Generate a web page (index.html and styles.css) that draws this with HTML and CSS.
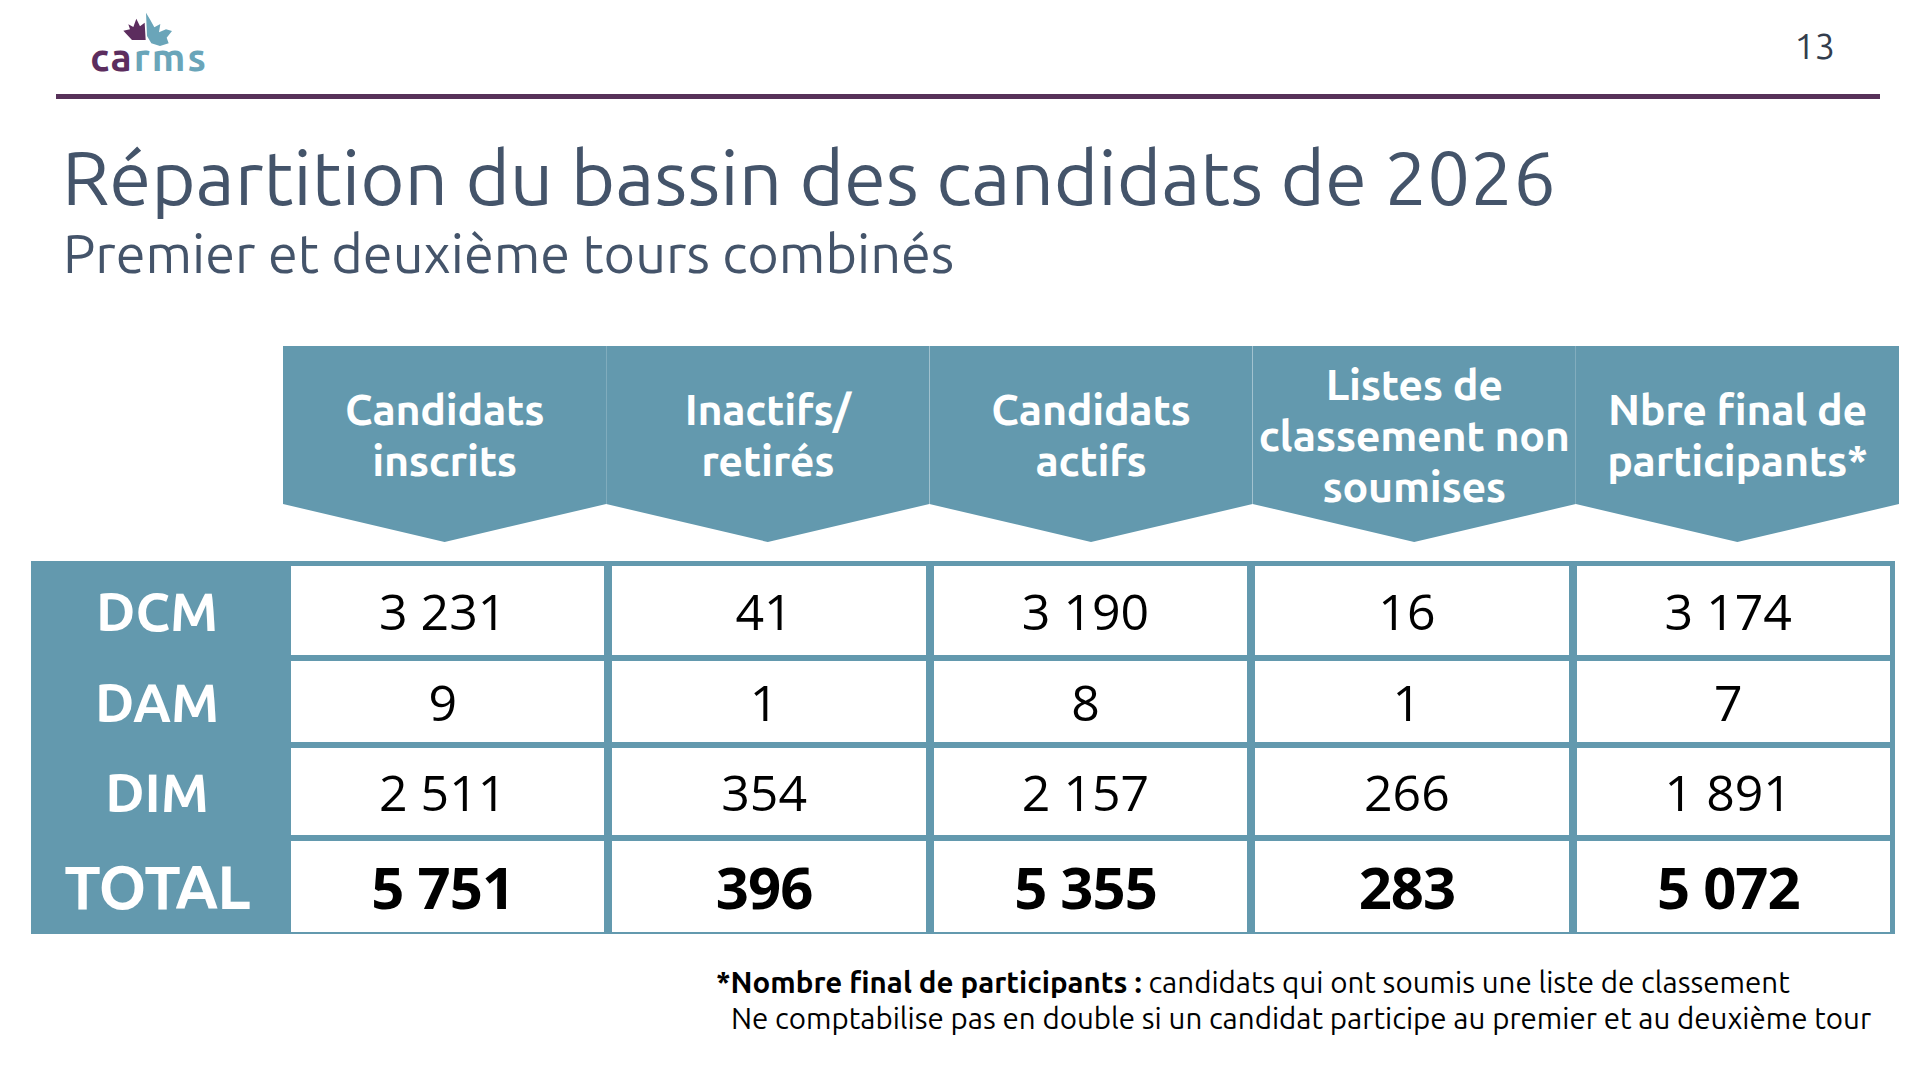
FILE: index.html
```html
<!DOCTYPE html>
<html lang="fr">
<head>
<meta charset="utf-8">
<title>Répartition du bassin des candidats de 2026</title>
<link rel="stylesheet" href="styles.css">
</head>
<body>
<div class="slide">
  <header class="top">
    <div class="logo">
      <svg class="crown" viewBox="0 0 240 120" width="80" height="40" aria-hidden="true">
        <path class="crown-purple" d="M40 62 L60 58 L55 43 L70 51 L79 26 L90 49 L104 38 L107 90 L66 90 Z"/>
        <path class="crown-teal" d="M108 8 L121 30 L133 52 L151 42 L147 67 L168 58 L186 63 L170 83 L176 100 L150 108 L124 100 L111 78 Z"/>
      </svg>
      <div class="wordmark"><span class="wm-a">ca</span><span class="wm-b">rms</span></div>
    </div>
    <div class="pagenum">13</div>
  </header>
  <div class="rule"></div>

  <h1 class="title">Répartition du bassin des candidats de 2026</h1>
  <p class="subtitle">Premier et deuxième tours combinés</p>

  <div class="heads">
    <div class="chev"><span>Candidats<br>inscrits</span></div>
    <div class="chev"><span>Inactifs/<br>retirés</span></div>
    <div class="chev"><span>Candidats<br>actifs</span></div>
    <div class="chev"><span>Listes de<br>classement non<br>soumises</span></div>
    <div class="chev"><span>Nbre final de<br>participants*</span></div>
  </div>

  <div class="grid">
    <div class="lbl r1">DCM</div>
    <div class="cell r1">3 231</div>
    <div class="cell r1">41</div>
    <div class="cell r1">3 190</div>
    <div class="cell r1">16</div>
    <div class="cell r1">3 174</div>

    <div class="lbl r2">DAM</div>
    <div class="cell r2">9</div>
    <div class="cell r2">1</div>
    <div class="cell r2">8</div>
    <div class="cell r2">1</div>
    <div class="cell r2">7</div>

    <div class="lbl r3">DIM</div>
    <div class="cell r3">2 511</div>
    <div class="cell r3">354</div>
    <div class="cell r3">2 157</div>
    <div class="cell r3">266</div>
    <div class="cell r3">1 891</div>

    <div class="lbl total">TOTAL</div>
    <div class="cell total">5 751</div>
    <div class="cell total">396</div>
    <div class="cell total">5 355</div>
    <div class="cell total">283</div>
    <div class="cell total">5 072</div>
  </div>

  <div class="note">
    <div><b>*Nombre final de participants :</b> candidats qui ont soumis une liste de classement</div>
    <div class="note2">Ne comptabilise pas en double si un candidat participe au premier et au deuxième tour</div>
  </div>
</div>
</body>
</html>
```

FILE: styles.css
```css
html, body {
  margin: 0;
  padding: 0;
  background: #ffffff;
}

.slide {
  width: 1920px;
  height: 1080px;
  overflow: hidden;
  display: flex;
  flex-direction: column;
  font-family: "Ubuntu", "Open Sans", "Noto Sans", sans-serif;
}

.top {
  height: 94px;
  box-sizing: border-box;
  padding: 13px 85px 0 89px;
  display: flex;
  justify-content: space-between;
  align-items: flex-start;
}

.logo {
  display: flex;
  flex-direction: column;
  align-items: center;
  width: 118px;
}

.crown {
  display: block;
  margin-top: -3px;
  margin-left: 4px;
}

.crown-purple { fill: #5c2d5e; }
.crown-teal { fill: #6aa5b9; }

.wordmark {
  font-family: "Ubuntu", "Open Sans", sans-serif;
  font-size: 39px;
  font-weight: 600;
  line-height: 1;
  margin-top: -13px;
  letter-spacing: 2px;
  margin-right: -2px;
}

.wm-a { color: #5c2d5e; }
.wm-b { color: #6aa5b9; }

.pagenum {
  margin-top: 15px;
  font-size: 36px;
  line-height: 1;
  color: #333d4d;
}

.rule {
  height: 5px;
  margin: 0 40px 0 56px;
  background: #573159;
}

.title {
  margin: 40px 0 0 62px;
  font-size: 76px;
  font-weight: 400;
  line-height: 1;
  color: #44546a;
}

.subtitle {
  margin: 11px 0 0 63px;
  font-size: 54px;
  line-height: 1;
  color: #44546a;
}

.heads {
  margin: 66px 0 0 283px;
  width: 1616px;
  display: grid;
  grid-template-columns: repeat(5, 1fr);
}

.chev {
  height: 196px;
  box-sizing: border-box;
  padding-bottom: 18px;
  background: #6399ae;
  clip-path: polygon(0 0, 100% 0, 100% 158px, 50% 100%, 0 158px);
  display: flex;
  align-items: center;
  justify-content: center;
  text-align: center;
  color: #ffffff;
  font-weight: 700;
  font-size: 43px;
  line-height: 51px;
  white-space: nowrap;
  letter-spacing: -0.3px;
}

.grid {
  margin: 19px 0 0 31px;
  width: 1864px;
  box-sizing: border-box;
  padding: 5px 5px 2px 0;
  background: #6399ae;
  display: grid;
  grid-template-columns: 252px repeat(5, 1fr);
  grid-template-rows: 89px 81px 87px 91px;
  column-gap: 8px;
  row-gap: 6px;
}

.lbl {
  display: flex;
  align-items: center;
  justify-content: center;
  color: #ffffff;
  font-weight: 700;
  font-size: 54px;
  line-height: 1;
}

.lbl.total {
  font-size: 61px;
  letter-spacing: -1px;
}

.cell {
  background: #ffffff;
  display: flex;
  align-items: center;
  justify-content: center;
  font-family: "Open Sans", "Liberation Sans", sans-serif;
  font-size: 50px;
  line-height: 1;
  color: #000000;
  padding-right: 10px;
}

.cell.total {
  font-weight: 700;
  font-size: 58px;
  letter-spacing: -1px;
}

.note {
  margin: 31px 0 0 716px;
  font-size: 29.5px;
  line-height: 36px;
  color: #000000;
}

.note2 {
  padding-left: 15px;
}
```
